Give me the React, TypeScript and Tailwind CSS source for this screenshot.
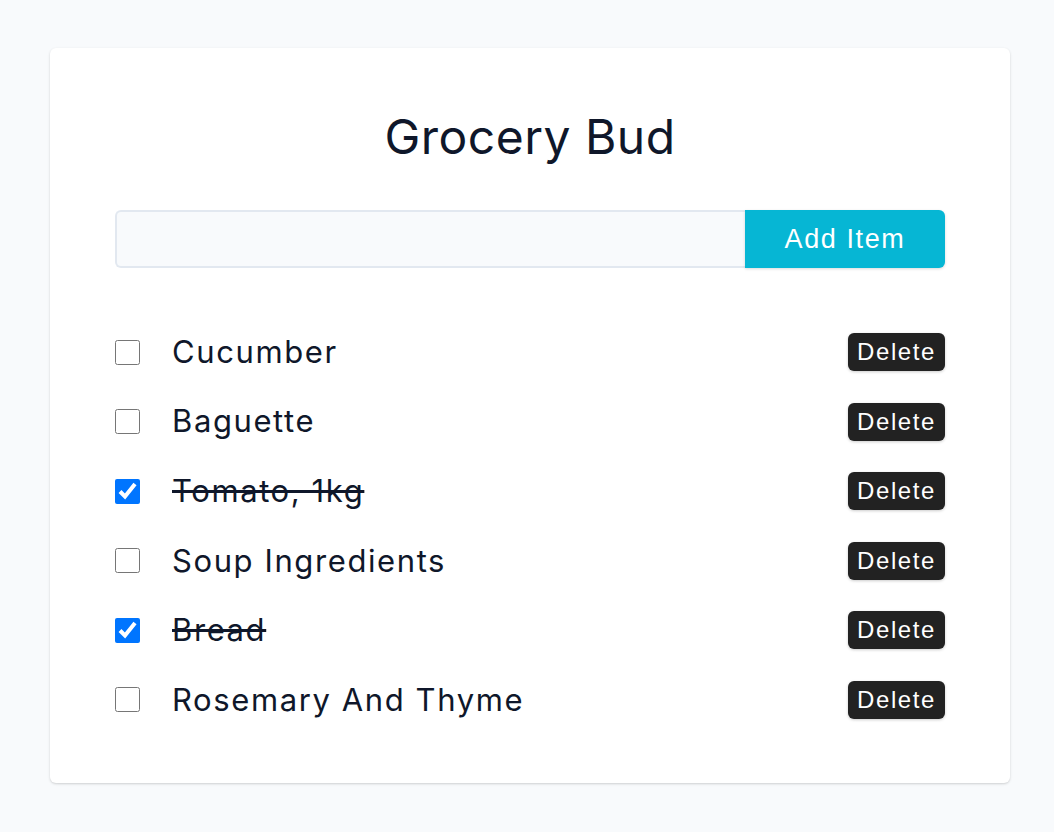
import { useState } from 'react'

type Item = { id: number; name: string; completed: boolean }

const initialItems: Item[] = [
  { id: 1, name: 'Cucumber', completed: false },
  { id: 2, name: 'Baguette', completed: false },
  { id: 3, name: 'Tomato, 1kg', completed: true },
  { id: 4, name: 'Soup Ingredients', completed: false },
  { id: 5, name: 'Bread', completed: true },
  { id: 6, name: 'Rosemary And Thyme', completed: false },
]

const App = () => {
  const [items, setItems] = useState<Item[]>(initialItems)
  const [newItem, setNewItem] = useState('')

  const toggle = (id: number) =>
    setItems(items.map(i => (i.id === id ? { ...i, completed: !i.completed } : i)))

  const remove = (id: number) => setItems(items.filter(i => i.id !== id))

  const add = (e: React.FormEvent) => {
    e.preventDefault()
    if (!newItem.trim()) return
    setItems([...items, { id: Date.now(), name: newItem, completed: false }])
    setNewItem('')
  }

  return (
    <div className="min-h-screen bg-[#f8fafc] pt-12 pb-12 pl-[6px] font-['Inter',sans-serif]">
      <section className="mx-auto w-[960px] rounded-md bg-white px-[65px] pt-[65px] pb-[64px] shadow-[0_1px_3px_rgba(0,0,0,0.12),0_1px_2px_rgba(0,0,0,0.06)]">
        <h1 className="mb-[49px] text-center text-[48px] leading-[48px] font-normal tracking-[0.5px] text-[#0f172a]">
          Grocery Bud
        </h1>

        <form onSubmit={add} className="flex h-[58px]">
          <input
            type="text"
            value={newItem}
            onChange={e => setNewItem(e.target.value)}
            className="h-full flex-1 rounded-l-md border-2 border-r-0 border-[#e2e8f0] bg-[#f8fafc] px-4 text-[24px] outline-none"
          />
          <button
            type="submit"
            className="h-full w-[200px] rounded-r-md bg-[#06b6d4] font-['Liberation_Sans',Arial,sans-serif] text-[27px] tracking-[1.6px] text-white shadow-[0_1px_3px_rgba(0,0,0,0.15)]"
          >
            Add Item
          </button>
        </form>

        <div className="mt-[65px] flex flex-col gap-[31.6px]">
          {items.map(item => (
            <div key={item.id} className="flex h-[38px] items-center">
              <input
                type="checkbox"
                checked={item.completed}
                onChange={() => toggle(item.id)}
                className="m-0 h-[25px] w-[25px] shrink-0"
              />
              <p
                className={`ml-[32px] flex-1 text-[31px] tracking-[1.6px] text-[#0f172a] ${
                  item.completed ? 'line-through' : ''
                }`}
              >
                {item.name}
              </p>
              <button
                onClick={() => remove(item.id)}
                className="h-[38px] rounded-md bg-[#222222] px-[9px] font-['Liberation_Sans',Arial,sans-serif] text-[24px] leading-none tracking-[1.6px] text-white shadow-[0_1px_3px_rgba(0,0,0,0.2)]"
              >
                Delete
              </button>
            </div>
          ))}
        </div>
      </section>
    </div>
  )
}

export default App
